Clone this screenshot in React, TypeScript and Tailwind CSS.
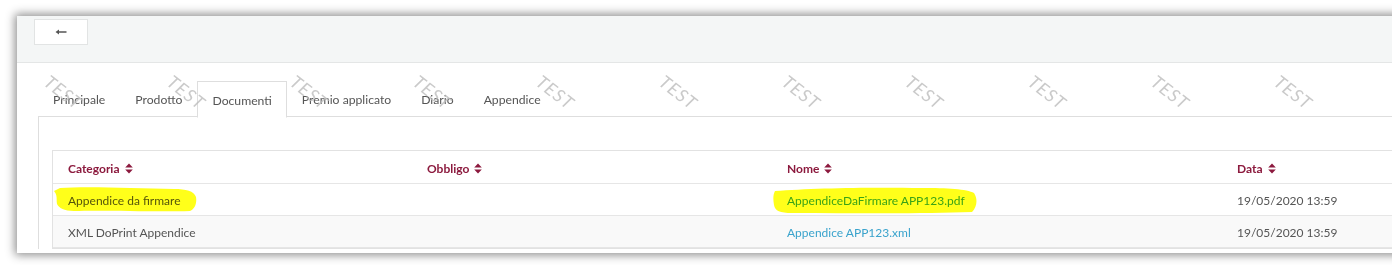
import React from 'react';

const tabs = ['Principale', 'Prodotto', 'Documenti', 'Premio applicato', 'Diario', 'Appendice'];

const rows = [
    { categoria: 'Appendice da firmare', obbligo: '', nome: 'AppendiceDaFirmare APP123.pdf', data: '19/05/2020 13:59' },
    { categoria: 'XML DoPrint Appendice', obbligo: '', nome: 'Appendice APP123.xml', data: '19/05/2020 13:59' },
];

const SortIcon: React.FC = () => (
    <svg width="8" height="11" viewBox="0 0 8 11" className="ml-[5px] inline-block align-[-1px]">
        <path d="M4 0.5 L7.8 4.5 H0.2 Z" fill="#8c1a3e" />
        <path d="M4 10.5 L7.8 6.5 H0.2 Z" fill="#8c1a3e" />
    </svg>
);

const Highlight: React.FC<{ className: string; d: string; w: number; h: number }> = ({ className, d, w, h }) => (
    <svg
        width={w}
        height={h}
        viewBox={`0 0 ${w} ${h}`}
        className={`pointer-events-none absolute mix-blend-multiply ${className}`}
    >
        <path d={d} fill="#ffff1a" />
    </svg>
);

const watermarks = [0, 1, 2, 3, 4, 5, 6, 7, 8, 9, 10];

const App: React.FC = () => {
    return (
        <div
            className="relative h-[265px] w-[1392px] overflow-hidden bg-white pl-[17px] pt-[16px]"
            style={{ fontFamily: 'Lato, "Open Sans", sans-serif' }}
        >
            <div className="h-[237px] w-[1400px] bg-white shadow-[0_0_9px_2px_rgba(0,0,0,0.45)]">
                {/* top bar */}
                <div className="h-[47px] border-b border-[#e4e6e6] bg-[#f4f6f6] pl-[17px] pt-[3px]">
                    <button className="flex h-[26px] w-[54px] items-center justify-center border border-[#e2e4e4] bg-white">
                        <svg width="12" height="6" viewBox="0 0 12 6">
                            <path d="M0.5 3 L4 0.5 V2.3 H11.5 V3.7 H4 V5.5 Z" fill="#555" />
                        </svg>
                    </button>
                </div>

                {/* tabs */}
                <div className="relative pl-[21px] pt-[18px]">
                    <div className="flex h-[36px] border-b border-[#dedede] text-[12.2px] text-[#555]">
                        {tabs.map((t) => (
                            <div
                                key={t}
                                className={
                                    t === 'Documenti'
                                        ? '-mb-px flex h-[37px] items-center border border-b-white border-[#dedede] bg-white px-[14px] pt-[4px]'
                                        : 'flex items-center border border-transparent px-[14px] pt-[4px]'
                                }
                            >
                                {t}
                            </div>
                        ))}
                    </div>

                    {/* watermark */}
                    <div className="pointer-events-none absolute left-[24px] top-[19px] flex gap-[71px]">
                        {watermarks.map((i) => (
                            <span
                                key={i}
                                className="inline-block w-[52px] rotate-[38deg] text-[18px] italic tracking-[1px] text-[#bdbdbd] opacity-80"
                            >
                                TEST
                            </span>
                        ))}
                    </div>

                    {/* panel */}
                    <div className="border-l border-[#dedede] pl-[13px] pt-[33px]">
                        <div className="relative border border-[#e2e2e2] text-[12px]">
                            <div className="grid h-[33px] grid-cols-[359px_360px_450px_1fr] items-center border-b border-[#e6e6e6] pt-[3px] font-bold text-[#8c1a3e]">
                                <div className="pl-[15px]">Categoria<SortIcon /></div>
                                <div className="pl-[15px]">Obbligo<SortIcon /></div>
                                <div className="pl-[15px]">Nome<SortIcon /></div>
                                <div className="pl-[15px]">Data<SortIcon /></div>
                            </div>
                            {rows.map((r, i) => (
                                <div
                                    key={r.nome}
                                    className={`grid h-[32px] grid-cols-[359px_360px_450px_1fr] items-center border-b border-[#e6e6e6] pt-[3px] ${
                                        i % 2 === 1 ? 'bg-[#f9f9f9]' : 'bg-white'
                                    }`}
                                >
                                    <div className="pl-[15px] text-[#555]">{r.categoria}</div>
                                    <div className="pl-[15px] text-[#555]">{r.obbligo}</div>
                                    <div className="pl-[15px] text-[#3aa3cc]">{r.nome}</div>
                                    <div className="pl-[15px] text-[#555]">{r.data}</div>
                                </div>
                            ))}

                            {/* highlighter marks */}
                            <Highlight
                                className="left-[1px] top-[34px]"
                                w={145}
                                h={28}
                                d="M6 3 C30 1 80 3 120 4 C132 4 140 6 142 12 C143 18 141 24 136 26 C100 27 50 25 20 26 C10 26 5 23 3 19 C2 14 4 11 0 6 Z"
                            />
                            <Highlight
                                className="left-[719px] top-[34px]"
                                w={207}
                                h={30}
                                d="M3 6 C40 3 100 2 150 3 C175 3 195 4 202 8 C206 14 205 22 200 27 C150 29 80 28 20 28 C8 28 3 26 2 20 C1 14 1 10 3 6 Z"
                            />
                        </div>
                    </div>
                </div>
            </div>
        </div>
    );
};

export default App;
